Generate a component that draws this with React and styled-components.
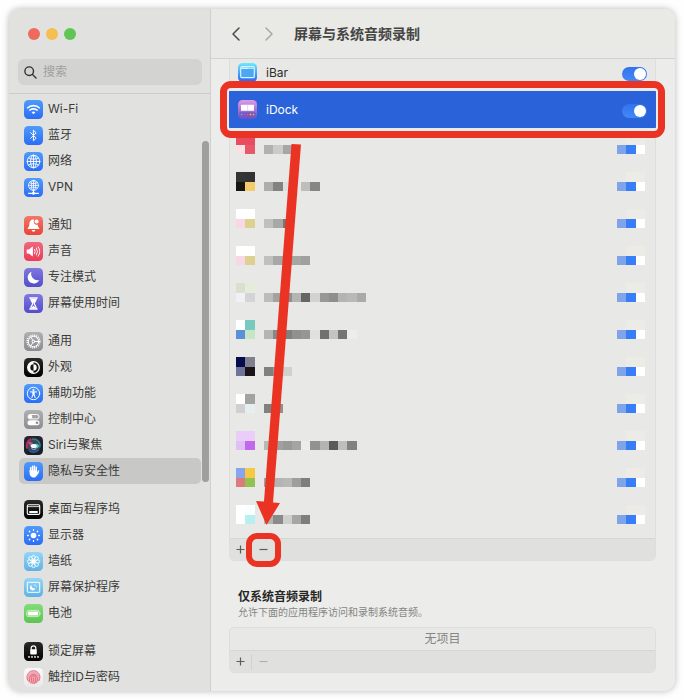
import { useState } from 'react'
import { styled, createGlobalStyle } from 'styled-components'

const GlobalStyle = createGlobalStyle`
  * {
    box-sizing: border-box;
  }

  body {
    margin: 0;
    background: #fefefe;
    color: #3b3b3a;
    font-family: Inter, "Noto Sans CJK SC", sans-serif;
    font-size: 12px;
    line-height: 16px;
  }
`

const Page = styled.div`
  height: 100vh;
  padding: 9px;
`

const Window = styled.div`
  display: flex;
  height: 100%;
  overflow: hidden;
  border-radius: 11px;
  background: #ececea;
  box-shadow: 0 0 7px rgba(0, 0, 0, 0.28);
`

const Sidebar = styled.aside`
  position: relative;
  display: flex;
  flex-direction: column;
  flex: 0 0 202px;
  min-width: 0;
  background: #e1e1df;
  border-right: 1px solid #d0d0ce;
`

const TrafficLights = styled.div`
  display: flex;
  gap: 7px;
  padding: 19px 19px 0;
`

const Light = styled.span`
  width: 12px;
  height: 12px;
  margin-right: -1px;
  border-radius: 50%;
  background: ${props => props.$color};
`

const SearchBox = styled.label`
  display: flex;
  align-items: center;
  gap: 6px;
  height: 26px;
  margin: 19px 8px 8px 9px;
  padding: 0 6px;
  border-radius: 6px;
  background: #d3d3d1;
`

const SearchInput = styled.input`
  flex: 1;
  min-width: 0;
  padding: 0;
  border: 0;
  outline: 0;
  background: none;
  font: inherit;

  &::placeholder {
    color: #a0a09e;
  }
`

const Nav = styled.nav`
  flex: 1;
  min-height: 0;
  overflow: hidden;
  padding-top: 2px;
  border-top: 1px solid #cbcbc9;
`

const NavGroup = styled.ul`
  margin: 0 9px 12px 10px;
  padding: 0;
  list-style: none;
`

const NavItem = styled.a`
  display: flex;
  align-items: center;
  gap: 5px;
  height: 26px;
  padding: 0 5px;
  border-radius: 5px;
  background: ${props => (props.$active ? '#c8c8c6' : 'none')};
  color: inherit;
  text-decoration: none;
  white-space: nowrap;
`

const ScrollThumb = styled.div`
  position: absolute;
  top: 132px;
  right: 1px;
  width: 7px;
  height: 50%;
  border-radius: 4px;
  background: #9f9f9d;
`

const Main = styled.main`
  display: flex;
  flex-direction: column;
  flex: 1;
  min-width: 0;
`

const Header = styled.header`
  display: flex;
  align-items: center;
  flex: none;
  height: 50px;
  padding-left: 17px;
  background: #e9e9e6;
  border-bottom: 1px solid #d2d2d0;
`

const ArrowButton = styled.button`
  display: flex;
  width: 33px;
  padding: 0 3px;
  border: 0;
  background: none;
  color: ${props => (props.disabled ? '#a8a8a6' : '#4a4a49')};
`

const Title = styled.h1`
  margin: 0;
  color: #454544;
  font-size: 14px;
  line-height: 20px;
`

const Scroller = styled.div`
  flex: 1;
  min-height: 0;
  overflow: hidden;
  padding: 0 19px 0 18px;
`

const Panel = styled.section`
  position: relative;
  border: 1px solid #dededc;
  border-radius: 5px;
  background: #e8e8e6;
`

/* the list is scrolled a little, its top edge sits under the header */
const AppPanel = styled(Panel)`
  margin-top: -6px;
`

const AppList = styled.ul`
  margin: 0;
  padding: 0 0 3px;
  list-style: none;
`

const AppRow = styled.li`
  position: relative;
  display: flex;
  align-items: center;
  gap: 9px;
  height: 37px;
  margin: 0 -1px;
  padding: 0 9px;
  background: ${props => (props.$selected ? '#2962d9' : 'none')};
  color: ${props => (props.$selected ? '#fff' : '#2c2c2b')};
`

const AppName = styled.label`
  flex: 1;
`

const Switch = styled.input`
  appearance: none;
  width: 25px;
  height: 14px;
  margin: 3px 0 0;
  border-radius: 7px;
  background: ${props => (props.checked ? 'linear-gradient(#3273ee, #4289f5)' : '#cfcfcd')};

  &::after {
    content: "";
    display: block;
    width: 12px;
    height: 12px;
    margin: 1px;
    margin-left: ${props => (props.checked ? '12px' : '1px')};
    border-radius: 50%;
    background: #fff;
  }
`

const HiddenRow = styled.li`
  display: flex;
  align-items: flex-start;
  gap: 9px;
  height: 37px;
  padding: 7px 10px 0 6px;
`

const Spacer = styled.span`
  flex: 1;
`

const RowHighlight = styled.div`
  position: absolute;
  z-index: 2;
  inset: -10px -9px;
  border: 7px solid #ea3323;
  border-radius: 11px;
  box-shadow: inset 0 0 0 2px #ececef;
  pointer-events: none;
`

const PanelFooter = styled.div`
  display: flex;
  align-items: center;
  height: 22px;
  border-top: 1px solid #d6d6d4;
  border-radius: 0 0 5px 5px;
  background: #e0e0de;
`

const FooterButton = styled.button`
  position: relative;
  display: flex;
  align-items: center;
  justify-content: center;
  width: 21px;
  height: 16px;
  padding: 0;
  border: 0;
  background: none;
  color: ${props => (props.disabled ? '#b2b2b0' : '#5c5c5b')};

  & + & {
    width: 24px;
    border-left: 1px solid #d2d2d0;
  }
`

const ButtonHighlight = styled.span`
  position: absolute;
  z-index: 2;
  inset: -9px -6px;
  border: 6px solid #ea3323;
  border-radius: 11px;
  pointer-events: none;
`

const Pointer = styled.svg`
  position: absolute;
  z-index: 1;
  top: 90px;
  left: 20px;
  pointer-events: none;
`

const SectionHead = styled.div`
  padding: 28px 9px 8px;
`

const SectionTitle = styled.h2`
  margin: 0;
  color: #262625;
  font-size: 12px;
  line-height: 16px;
`

const SectionText = styled.p`
  margin: 0;
  color: #858583;
  font-size: 10px;
  line-height: 14px;
`

const Empty = styled.p`
  margin: 0;
  color: #858583;
  line-height: 22px;
  text-align: center;
`

const blue = ['#4f9bfa', '#2a6df6']
const indigo = ['#7f78e0', '#544dcb']
const gray = ['#b0b0b4', '#8b8b90']
const black = ['#2a2a2a', '#000']
const sky = ['#93d6f8', '#5fb2e6']

const line = { fill: 'none', stroke: '#fff', strokeLinecap: 'round', strokeLinejoin: 'round' }

const icons = {
  wifi: {
    colors: blue,
    art: (
      <g {...line} strokeWidth="1.6" strokeLinecap="butt">
        <path d="M3.2 8.2a9 9 0 0 1 12.6 0M5.4 10.5a5.9 5.9 0 0 1 8.2 0" />
        <path d="M9.5 14.2 7.6 12.3a2.8 2.8 0 0 1 3.8 0Z" fill="#fff" stroke="none" />
      </g>
    )
  },
  bluetooth: {
    colors: blue,
    art: <path {...line} strokeWidth="1" d="m6.6 6.7 5.6 5.4-2.8 2.7V4.2l2.8 2.7-5.6 5.4" />
  },
  network: {
    colors: blue,
    art: (
      <g {...line} strokeWidth=".9">
        <circle cx="9.5" cy="9.5" r="6.3" />
        <ellipse cx="9.5" cy="9.5" rx="2.9" ry="6.3" />
        <path d="M3.2 9.5h12.6M9.5 3.2v12.6M4.5 6c3 1.7 7 1.7 10 0M4.5 13c3-1.7 7-1.7 10 0" />
      </g>
    )
  },
  vpn: {
    colors: blue,
    art: (
      <g {...line} strokeWidth=".8">
        <circle cx="9.5" cy="7.4" r="5" />
        <ellipse cx="9.5" cy="7.4" rx="2.2" ry="5" />
        <path d="M4.5 7.4h10M9.5 2.4v10M5.5 4.7c2.4 1.3 5.6 1.3 8 0M5.5 10.1c2.4-1.3 5.6-1.3 8 0" />
        <path strokeWidth="1.2" d="M9.5 12.6v1.6M4.6 15.3h3M11.4 15.3h3" />
        <circle cx="9.5" cy="15.2" r="1.2" fill="#fff" />
      </g>
    )
  },
  bell: {
    colors: ['#f0786a', '#ea4437'],
    art: (
      <g fill="#fff">
        <path d="M9.3 3.6c-2.5 0-3.8 1.8-3.9 4.2-.1 2.6-.7 3.3-1.6 4.3-.3.4 0 1 .5 1h10.4c.5 0 .8-.6.5-1-.8-1-1.3-1.7-1.5-3.4a3.1 3.1 0 0 1-3.3-4.9Z" />
        <circle cx="12.6" cy="5.5" r="2" />
        <path d="M7.7 14h3.6a1.8 1.8 0 0 1-3.6 0Z" />
      </g>
    )
  },
  sound: {
    colors: ['#f0687c', '#ec3b59'],
    art: (
      <g {...line} strokeWidth=".9">
        <path fill="#fff" stroke="none" d="M2.7 7.6h2.2l3.3-2.8c.3-.2.7 0 .7.3v8.8c0 .3-.4.5-.7.3l-3.3-2.8H2.7Z" />
        <path d="M10.6 7.4q1.3 2.1 0 4.2M12.4 6q2.3 3.5 0 7M14.2 4.8q3.3 4.7 0 9.4" />
      </g>
    )
  },
  moon: {
    colors: indigo,
    art: <path fill="#fff" d="M7.5 3.7a6.1 6.1 0 1 0 7.8 8.3A6.4 6.4 0 0 1 7.5 3.7Z" />
  },
  hourglass: {
    colors: indigo,
    art: (
      <g {...line} strokeWidth="1.2">
        <path d="M5.9 4h7.2M5.9 15h7.2" strokeWidth="1.5" />
        <path d="M6.8 4.5c0 3 1.9 3.5 1.9 5s-1.9 2-1.9 5M12.2 4.5c0 3-1.9 3.5-1.9 5s1.9 2 1.9 5" />
        <path fill="#fff" stroke="none" d="M7 5h5l-.6 2-1.9 2.2L7.6 7ZM7 14.5c.3-1.3 1.5-1.7 2.5-2.7 1 1 2.2 1.4 2.5 2.7Z" />
      </g>
    )
  },
  gear: {
    colors: gray,
    art: (
      <g {...line} strokeWidth="1">
        <circle cx="9.5" cy="9.5" r="6.3" strokeWidth="1.5" strokeDasharray="1.1 .88" strokeLinecap="butt" />
        <circle cx="9.5" cy="9.5" r="5.2" />
        <circle cx="9.5" cy="9.5" r="1.3" />
        <path d="M10.8 9.5h3.9M8.8 8.4 6.9 5M8.8 10.6 6.9 14" />
      </g>
    )
  },
  appearance: {
    colors: black,
    art: (
      <g>
        <circle cx="9.5" cy="9.5" r="5.8" fill="none" stroke="#fff" strokeWidth="1.3" />
        <path fill="#fff" d="M9.5 3.7a5.8 5.8 0 0 0 0 11.6v-2.6a3.2 3.2 0 0 1 0-6.4Z" />
        <path fill="#fff" d="M9.5 6.3a3.2 3.2 0 0 1 0 6.4Z" />
      </g>
    )
  },
  access: {
    colors: blue,
    art: (
      <g {...line} strokeWidth="1">
        <circle cx="9.5" cy="9.5" r="6.2" />
        <circle cx="9.5" cy="6" r="1.1" fill="#fff" stroke="none" />
        <path d="M6.3 7.9h6.4M8.8 8.2v2.5l-.9 2.8M10.200 8.200v2.500l.9 2.800M9.500 8v3" />
      </g>
    )
  },
  control: {
    colors: gray,
    art: (
      <g>
        <rect x="4" y="4.5" width="11" height="4.4" rx="2.2" fill="none" stroke="#fff" />
        <circle cx="6.3" cy="6.7" r="2" fill="#fff" />
        <rect x="3.5" y="10.3" width="12" height="5" rx="2.5" fill="#fff" />
        <circle cx="13" cy="12.8" r="1.4" fill="#949498" />
      </g>
    )
  },
  siri: {
    colors: ['#2b2032', '#14202c'],
    art: (
      <g fill="none">
        <circle cx="9.5" cy="9.5" r="7" fill="#3b4555" />
        <path stroke="#b0305e" strokeWidth="2" d="M3.4 12.5A7 7 0 0 1 7.2 3" />
        <path stroke="#2a7f80" strokeWidth="1.6" d="M8 3.2a6.5 6.5 0 0 1 7.6 8.3" />
        <path stroke="#2d588f" strokeWidth="1.6" d="M5 14.5a6.7 6.7 0 0 0 9.6-.8" />
        <path fill="#be5278" d="M4 6.5c3-1.600 4.500 0 6 3.200l-2.500.9C6 10 5 8.500 4 6.500Z" />
        <path fill="#5bc3c0" d="M9.5 9c2-2 4.500-1.500 5.700.9-1 2.500-3.700 3.100-5.700 1.900Z" />
        <path fill="#8fc8ee" d="M6.500 11.500c2 1.800 4.500 1.800 6.500.5-1.500 2.500-5 2.600-6.500-.5Z" />
        <ellipse cx="9.7" cy="9.9" rx="3" ry="2" fill="#f2fbff" />
      </g>
    )
  },
  hand: {
    colors: blue,
    art: (
      <g {...line} strokeWidth="1.5">
        <path d="M6.6 9.5V5.7M8.5 8.5V4.3M10.4 8.5V4M12.3 9V5.3M13.6 11.5l1-2.5" />
        <path fill="#fff" strokeWidth=".5" d="M5.9 8.5h7.1v2.5l.7-.2c-.4 2.7-1.7 4.5-4 4.5-2.4 0-3.8-1.6-3.8-4Z" />
      </g>
    )
  },
  dock: {
    colors: black,
    art: (
      <g {...line} strokeWidth="1.1">
        <rect x="3.3" y="4.7" width="12.4" height="9.7" rx="1.2" />
        <path d="M3.5 6.6h12" strokeWidth=".8" />
        <rect x="5.2" y="11" width="8.6" height="2" rx=".4" fill="#fff" stroke="none" />
      </g>
    )
  },
  display: {
    colors: blue,
    art: (
      <g {...line} strokeWidth="1.3">
        <circle cx="9.5" cy="9.5" r="2.8" fill="#fff" stroke="none" />
        <path d="M9.5 3.6v.7M9.5 14.7v.7M3.6 9.5h.7M14.7 9.5h.7M5.3 5.3l.5.5M13.2 13.2l.5.5M5.3 13.7l.5-.5M13.2 5.8l.5-.5" />
      </g>
    )
  },
  wallpaper: {
    colors: sky,
    art: (
      <g fill="none" stroke="#fff" strokeWidth=".9">
        {[0, 45, 90, 135, 180, 225, 270, 315].map(angle => (
          <ellipse key={angle} cx="9.5" cy="5.3" rx="1.7" ry="2" transform={`rotate(${angle} 9.5 9.5)`} />
        ))}
        <circle cx="9.5" cy="9.5" r="1.7" fill="#fff" />
      </g>
    )
  },
  saver: {
    colors: sky,
    art: (
      <g>
        <rect x="3.3" y="4.3" width="12.4" height="10" rx=".6" fill="none" stroke="#fff" strokeWidth="1" />
        <path fill="#fff" d="M7.4 7a2.9 2.9 0 1 0 4.2 3.3A3.1 3.1 0 0 1 7.4 7Z" />
        <circle cx="11" cy="7.3" r=".7" fill="#fff" />
        <circle cx="12.6" cy="8.7" r=".5" fill="#fff" />
      </g>
    )
  },
  battery: {
    colors: ['#83dd79', '#5cc550'],
    art: (
      <g>
        <rect x="2.7" y="6.4" width="12.6" height="6.2" rx="1.7" fill="none" stroke="#fff" strokeWidth=".8" opacity=".8" />
        <rect x="3.8" y="7.4" width="10.4" height="4.2" rx=".7" fill="#fff" />
        <path fill="#fff" d="M16 8.2q1.3 1.3 0 2.6Z" />
      </g>
    )
  },
  lock: {
    colors: black,
    art: (
      <g fill="#fff">
        <path d="M7.2 8V6.1a2.3 2.3 0 0 1 4.6 0V8" fill="none" stroke="#fff" strokeWidth="1.2" />
        <rect x="6.2" y="7.2" width="6.6" height="5.3" rx=".9" />
        <circle cx="5" cy="14.9" r=".9" />
        <circle cx="8" cy="14.9" r=".9" />
        <circle cx="11" cy="14.9" r=".9" />
        <circle cx="14" cy="14.9" r=".9" />
      </g>
    )
  },
  touch: {
    colors: ['#fafafa', '#e8e8e8'],
    art: (
      <g fill="none" stroke="#e2687a" strokeWidth=".9">
        <circle cx="9.5" cy="9.5" r="6.4" fill="#f0aab3" stroke="none" />
        <path d="M4.2 13a6.5 6.5 0 1 1 10.5 0M5 14.3c1-1.5.4-3.3.7-5a3.9 3.9 0 0 1 7.6 0c.3 2-.1 3.7-.9 5.4M6.8 15.4c1.2-2 .6-4 .7-5.7a2 2 0 0 1 4 0c.2 2.5-.2 4.4-1.2 6.2M9.5 9.7c.1 2.3-.1 4.2-.9 6" />
      </g>
    )
  },
  ibar: {
    colors: ['#6ceafa', '#2b62f6'],
    art: (
      <g>
        <rect x="2.7" y="3.7" width="13.6" height="11" rx="1.3" fill="#4aa7f4" stroke="#d4f4ff" strokeWidth="1.2" />
        <path d="M3.3 5.2h12.4" stroke="#d4f4ff" strokeWidth="1.6" />
        <path d="M10.5 5h4" stroke="#60b6f4" strokeWidth=".9" strokeDasharray="1 .6" />
      </g>
    )
  },
  idock: {
    colors: ['#e09be4', '#6a50c6'],
    art: (
      <g>
        <rect x="3" y="4.8" width="13" height="6" rx=".5" fill="#fff" />
        <path d="M9.6 5v5.6" stroke="#d8bce8" strokeWidth=".6" />
        <rect x="1.5" y="12.6" width="16" height="3.6" rx=".8" fill="#7b50b8" />
        <circle cx="3.6" cy="14.4" r="1" fill="#52aef0" />
        <circle cx="6.5" cy="14.4" r="1" fill="#7e6cf2" />
        <circle cx="9.5" cy="14.4" r="1" fill="#ec4e80" />
        <circle cx="12.5" cy="14.4" r="1" fill="#f2b442" />
        <circle cx="15.5" cy="14.4" r="1" fill="#7fd070" />
      </g>
    )
  }
}

const Icon = ({ name }) => {
  const { colors, art } = icons[name]
  return (
    <svg width="19" height="19" viewBox="0 0 19 19" aria-hidden="true">
      <linearGradient id={`bg-${name}`} x1="0" y1="0" x2="0" y2="1">
        <stop offset="0" stopColor={colors[0]} />
        <stop offset="1" stopColor={colors[1]} />
      </linearGradient>
      <rect width="19" height="19" rx="4.5" fill={`url(#bg-${name})`} />
      {art}
    </svg>
  )
}

const groups = [
  [['wifi', 'Wi-Fi'], ['bluetooth', '蓝牙'], ['network', '网络'], ['vpn', 'VPN']],
  [['bell', '通知'], ['sound', '声音'], ['moon', '专注模式'], ['hourglass', '屏幕使用时间']],
  [
    ['gear', '通用'],
    ['appearance', '外观'],
    ['access', '辅助功能'],
    ['control', '控制中心'],
    ['siri', 'Siri与聚焦'],
    ['hand', '隐私与安全性']
  ],
  [
    ['dock', '桌面与程序坞'],
    ['display', '显示器'],
    ['wallpaper', '墙纸'],
    ['saver', '屏幕保护程序'],
    ['battery', '电池']
  ],
  [['lock', '锁定屏幕'], ['touch', '触控ID与密码']]
]

// pixelated apps: four icon blocks, then the grey blocks of the name
const hiddenApps = [
  { icon: ['#e84c60', '#e84c60', '#fae0e2', '#e85868'], name: ['#b1b1af', '#cbcbc9', '#a6a6a4'] },
  { icon: ['#353535', '#333333', '#1a1612', '#f3cc6c'], name: ['#adadab', '#828280', '#dfdfdd', null, '#bebebc', '#868684'] },
  { icon: ['#fff', '#fff', '#f8d8e6', '#ded090'], name: ['#c0c0be', '#a8a8a6', '#777775'] },
  { icon: ['#fff', '#fff', '#f8d8e6', '#ded090'], name: ['#c0c0be', '#a8a8a6', '#a0a09e', '#a6a6a4', '#a0a09e'] },
  {
    icon: ['#dcdece', '#e4ecda', '#f0f0f6', '#d4d4d8'],
    name: ['#bcbcba', '#a2a2a0', '#90908e', '#b4b4b2', '#666664', '#d2d2d0', '#989896', '#8e8e8c', '#b4b4b2', '#b9b9b7', '#aaaaa8']
  },
  {
    icon: ['#fff', '#78cac0', '#5a90d8', '#c6e6c8'],
    name: ['#b4b4b2', '#888886', '#80807e', '#90908e', '#969694', '#e0e0de', '#70706e', '#c4c4c2', '#757573', '#ededeb']
  },
  { icon: ['#040c4c', '#808090', '#70749a', '#1a1418'], name: ['#80807e', '#9a9a98', '#d0d0ce'] },
  { icon: ['#fff', '#a2a2a2', '#d0d0d0', '#e6eef0'], name: ['#80807e', '#90908e'] },
  {
    icon: ['#eacdf8', '#eacdf8', '#e0c0f4', '#c268ec'],
    name: ['#b8b8b6', '#a0a09e', '#999997', '#a4a4a2', '#ececea', '#929290', '#b4b4b2', '#5a5a58', '#bebebc', '#828280']
  },
  { icon: ['#86a4f0', '#f6c844', '#dc7a7e', '#92c252'], name: ['#a0a09e', '#b4b4b2', '#b8b8b6', '#9e9e9c', '#7e7e7c'] },
  { icon: ['#fff', '#f8ffff', '#fff', '#b6f0f0'], name: ['#b4b4b2', '#8a8a88', '#cfcfcd', '#a6a6a4', '#7e7e7c'] }
]

const block = 9.27

const Mosaic = ({ columns, colors, width }) => (
  <svg width={width} height="19" aria-hidden="true">
    {colors.map((color, i) => color && (
      <rect
        key={i}
        x={(i % columns) * block}
        y={Math.floor(i / columns) * 9.5}
        width={block}
        height="9.5"
        fill={color}
        shapeRendering="crispEdges"
      />
    ))}
  </svg>
)

const NameMosaic = ({ colors }) => (
  <Mosaic columns={12} width="112" colors={[...Array(12).fill(null), ...colors]} />
)

const Chevron = ({ d }) => (
  <svg width="10" height="16" viewBox="0 0 10 16" fill="none" stroke="currentColor" strokeWidth="1.5" strokeLinecap="round" strokeLinejoin="round">
    <path d={d} />
  </svg>
)

const Sign = ({ d }) => (
  <svg width="9" height="9" viewBox="0 0 9 9" stroke="currentColor" strokeWidth="1.2">
    <path d={d} />
  </svg>
)

const plus = 'M.5 4.5h8M4.5.5v8'
const minus = 'M.5 4.5h8'

const App = () => {
  const [enabled, setEnabled] = useState({ ibar: true, idock: true })
  const toggle = id => setEnabled({ ...enabled, [id]: !enabled[id] })

  return (
    <Page>
      <GlobalStyle />
      <Window>
        <Sidebar>
          <TrafficLights>
            <Light $color="#ec6a5e" />
            <Light $color="#f5bf4f" />
            <Light $color="#61c554" />
          </TrafficLights>
          <SearchBox>
            <svg width="13" height="13" viewBox="0 0 13 13" fill="none" stroke="#333" strokeWidth="1.4" strokeLinecap="round">
              <circle cx="5.2" cy="5.2" r="4.3" />
              <path d="m8.5 8.5 3.5 3.5" />
            </svg>
            <SearchInput type="search" placeholder="搜索" aria-label="搜索" />
          </SearchBox>
          <Nav>
            {groups.map(group => (
              <NavGroup key={group[0][0]}>
                {group.map(([name, label]) => (
                  <li key={name}>
                    <NavItem href={`#${name}`} $active={name === 'hand'}>
                      <Icon name={name} />
                      {label}
                    </NavItem>
                  </li>
                ))}
              </NavGroup>
            ))}
          </Nav>
          <ScrollThumb />
        </Sidebar>
        <Main>
          <Header>
            <ArrowButton aria-label="返回">
              <Chevron d="M8 2 2 8l6 6" />
            </ArrowButton>
            <ArrowButton aria-label="前进" disabled>
              <Chevron d="m2 2 6 6-6 6" />
            </ArrowButton>
            <Title>屏幕与系统音频录制</Title>
          </Header>
          <Scroller>
            <AppPanel>
              <AppList>
                <AppRow>
                  <Icon name="ibar" />
                  <AppName htmlFor="ibar">iBar</AppName>
                  <Switch type="checkbox" id="ibar" checked={enabled.ibar} onChange={() => toggle('ibar')} />
                </AppRow>
                <AppRow $selected>
                  <Icon name="idock" />
                  <AppName htmlFor="idock">iDock</AppName>
                  <Switch type="checkbox" id="idock" checked={enabled.idock} onChange={() => toggle('idock')} />
                  <RowHighlight />
                </AppRow>
                {hiddenApps.map((app, i) => (
                  <HiddenRow key={i}>
                    <Mosaic columns={2} width="19" colors={app.icon} />
                    <NameMosaic colors={app.name} />
                    <Spacer />
                    <Mosaic columns={3} width="28" colors={[null, '#ecebe6', '#ecebe6', '#80a4ea', '#387ef6', '#fff']} />
                  </HiddenRow>
                ))}
              </AppList>
              <PanelFooter>
                <FooterButton aria-label="添加"><Sign d={plus} /></FooterButton>
                <FooterButton aria-label="移除">
                  <Sign d={minus} />
                  <ButtonHighlight />
                </FooterButton>
              </PanelFooter>
              <Pointer width="60" height="384" viewBox="0 0 60 384" fill="#ea3323">
                <path d="M41.5 0 51 .5 23 358.500l7 .5L16.500 381 6 357l8 .6Z" />
              </Pointer>
            </AppPanel>
            <SectionHead>
              <SectionTitle>仅系统音频录制</SectionTitle>
              <SectionText>允许下面的应用程序访问和录制系统音频。</SectionText>
            </SectionHead>
            <Panel>
              <Empty>无项目</Empty>
              <PanelFooter>
                <FooterButton aria-label="添加"><Sign d={plus} /></FooterButton>
                <FooterButton aria-label="移除" disabled><Sign d={minus} /></FooterButton>
              </PanelFooter>
            </Panel>
          </Scroller>
        </Main>
      </Window>
    </Page>
  )
}

export default App
